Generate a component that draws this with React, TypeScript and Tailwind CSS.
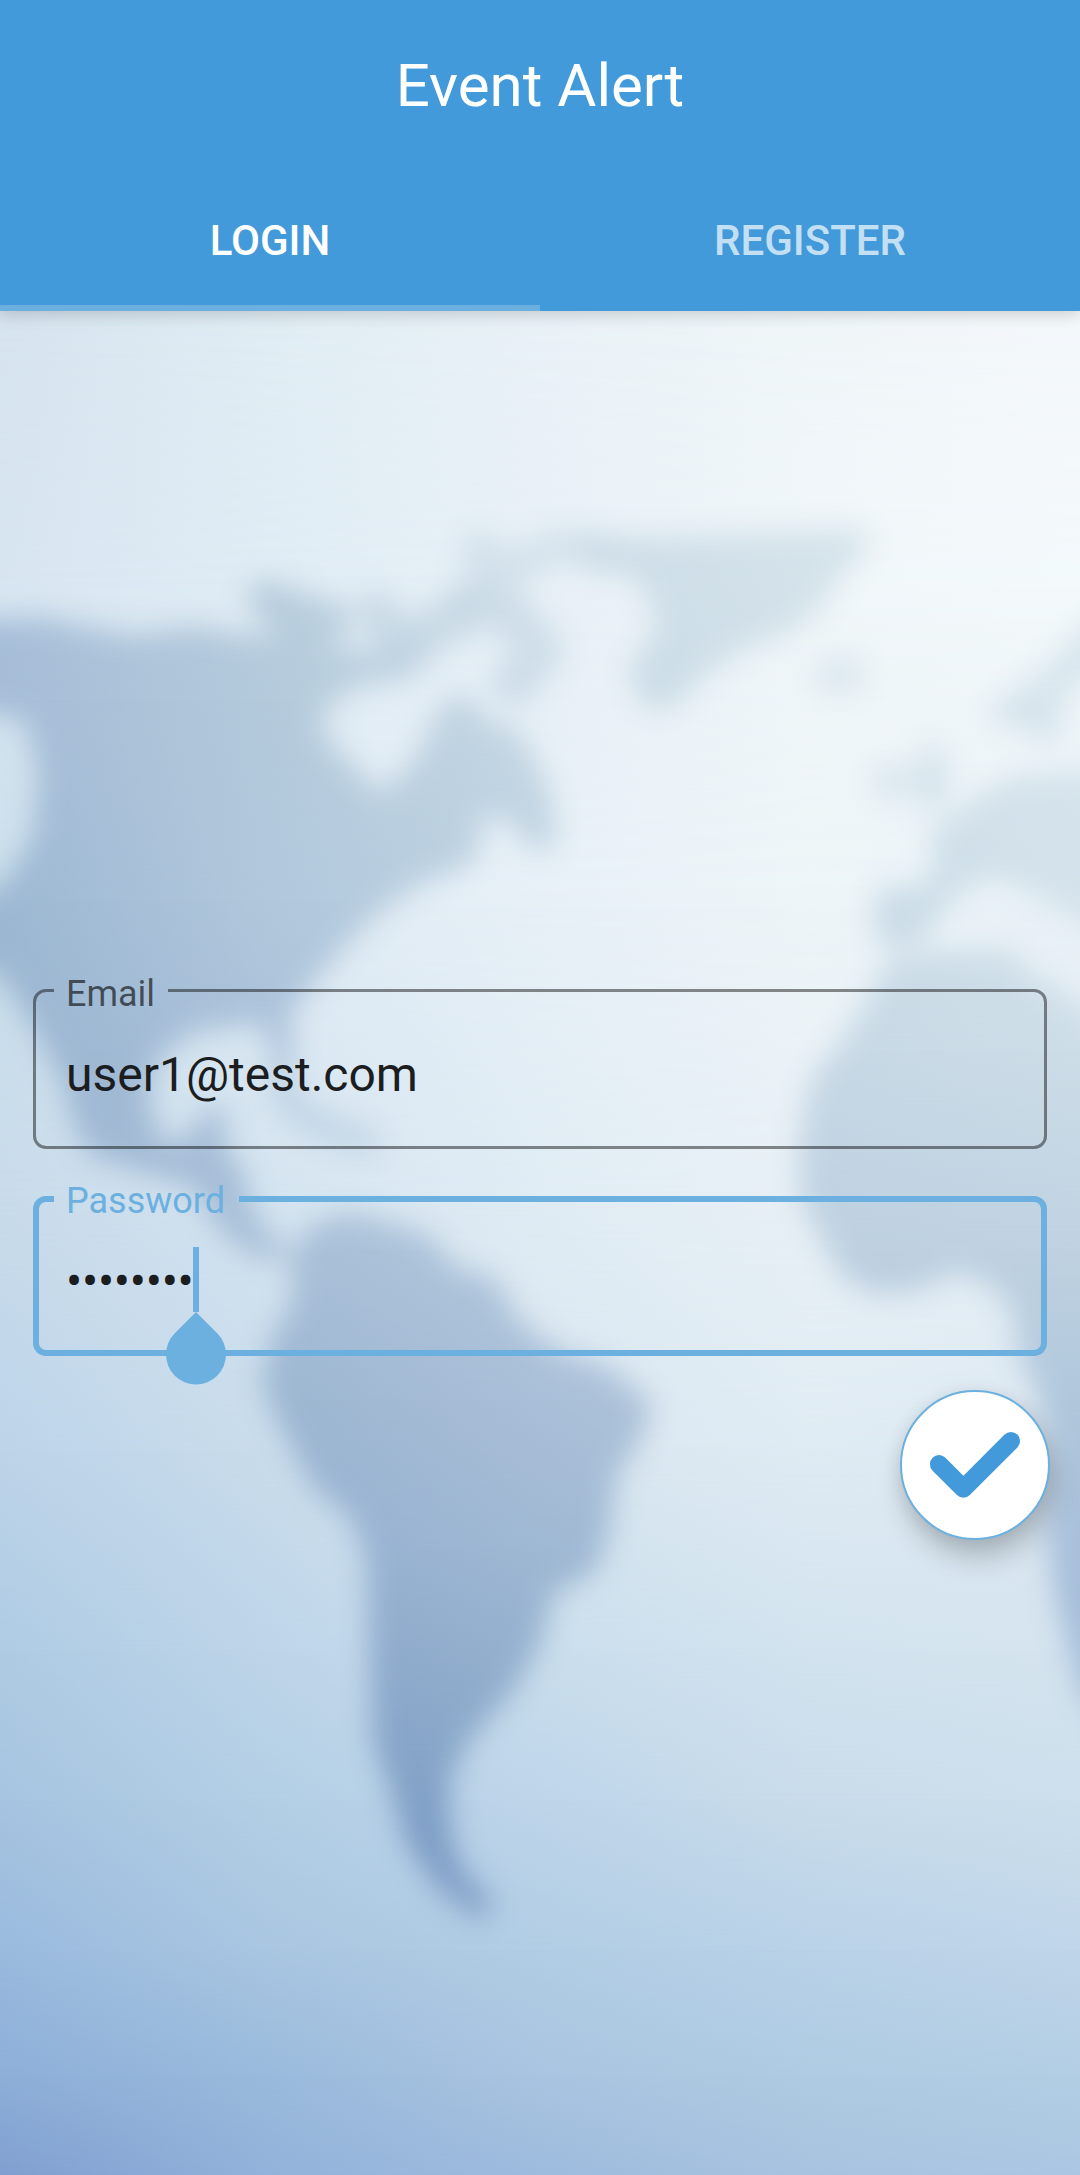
type Mesh = { id: string; xs: number[]; rows: { y: number; colors: string[] }[] };

const SEA: Mesh = {
  id: 'sea',
  xs: [0, 270, 540, 810, 1080],
  rows: [
    { y: 310, colors: ['#d6e4ef', '#e1edf4', '#e9f2f7', '#f0f6f9', '#f4f8fb'] },
    { y: 600, colors: ['#d7e5f1', '#dfecf4', '#e8f0f7', '#f0f6f9', '#f3f9fb'] },
    { y: 900, colors: ['#cbdfeb', '#dfebf4', '#e7f0f7', '#edf5f8', '#e9f1f7'] },
    { y: 1200, colors: ['#c8dbea', '#d4e4f0', '#e0ecf4', '#e8f0f6', '#e4eef5'] },
    { y: 1450, colors: ['#bdd4e9', '#c9dceb', '#d8e6f0', '#dfebf3', '#dde9f2'] },
    { y: 1650, colors: ['#aecbe3', '#bed5e9', '#cadeec', '#d2e3ef', '#d5e4ef'] },
    { y: 1800, colors: ['#a6c4e0', '#b3cfe5', '#bed5ea', '#c9dcea', '#ccdfec'] },
    { y: 1950, colors: ['#9abade', '#a9c6e1', '#b1cde4', '#b9d2e8', '#c0d5e9'] },
    { y: 2075, colors: ['#8dafd8', '#9abadc', '#a9c4e0', '#aecbe2', '#b2cee4'] },
    { y: 2175, colors: ['#809fd0', '#93b2da', '#9dbbdd', '#a7c3df', '#abc6e2'] },
  ],
};

const LAND: Mesh = {
  id: 'land',
  xs: [0, 270, 540, 810, 1080],
  rows: [
    { y: 500, colors: ['#a8bfd9', '#b8cddd', '#cddde7', '#d5e4eb', '#d9e7ef'] },
    { y: 700, colors: ['#a5bcd7', '#b4cadb', '#c6d8e4', '#d2e1e9', '#d7e5ed'] },
    { y: 900, colors: ['#9db8d3', '#b1c8dc', '#bed2e1', '#c8dae6', '#d3e2ea'] },
    { y: 1050, colors: ['#99b4d0', '#abc1da', '#bccfdf', '#c7d8e5', '#cddde8'] },
    { y: 1250, colors: ['#9db6d3', '#a7bed7', '#b2c7dc', '#bdd0e0', '#bfd2e1'] },
    { y: 1400, colors: ['#94afd0', '#9cb6d1', '#aabfd8', '#b4c8dc', '#b0c7db'] },
    { y: 1550, colors: ['#88a6ca', '#94afcf', '#9fb8d3', '#a5bdd7', '#a8bfdb'] },
    { y: 1750, colors: ['#7899c2', '#819fc6', '#8caaca', '#97b2cf', '#a0bad6'] },
    { y: 1850, colors: ['#7495bf', '#7898c2', '#819fc7', '#8eabce', '#9cb6d4'] },
  ],
};

const COASTS = [
  // North and Central America
  '-50,620 0,620 43,618 90,628 138,636 190,627 245,634 285,640 356,650 425,652 415,676 356,686 322,712 328,740 355,768 380,792 405,772 424,745 438,710 463,692 490,722 518,729 535,760 550,790 556,840 545,852 528,845 510,820 478,818 482,850 455,872 427,880 380,911 340,951 308,990 290,1014 294,1060 280,1062 261,1024 198,1030 165,1052 150,1075 151,1110 162,1142 190,1138 203,1112 226,1110 224,1147 243,1170 253,1213 272,1238 290,1248 280,1258 258,1258 224,1234 193,1187 138,1170 90,1155 72,1120 65,1087 34,1027 0,975 -50,960 -50,910 0,887 22,856 34,828 38,770 26,722 0,713 -50,710',
  // Arctic islands
  '243,590 270,580 300,592 345,605 352,625 330,650 280,648 262,620',
  // Greenland
  '575,530 637,537 747,533 858,528 872,542 842,576 813,616 780,637 747,648 707,673 682,700 657,712 635,696 630,665 653,634 653,605 630,576 580,570',
  // Scandinavia
  '1120,600 1080,630 1047,666 1013,691 988,709 1000,726 1030,730 1047,750 1062,728 1063,698 1080,684 1120,660',
  // Europe
  '1130,765 1080,770 1013,776 980,794 947,819 930,832 933,866 920,887 880,885 872,930 890,950 923,943 943,909 973,884 1000,878 1040,896 1080,918 1130,935',
  // Africa
  '1017,951 947,950 890,958 868,998 845,1035 810,1080 799,1141 800,1198 823,1242 843,1276 873,1293 917,1290 957,1271 990,1285 1013,1308 1017,1350 1033,1382 1046,1434 1047,1531 1055,1595 1067,1640 1082,1692 1130,1760 1130,1040 1080,1005 1047,980 1023,969',
  // South America
  '291,1251 315,1224 350,1213 387,1222 427,1234 455,1266 497,1280 518,1320 560,1351 607,1366 652,1402 642,1437 617,1474 608,1537 594,1572 553,1593 540,1644 513,1690 467,1742 449,1782 452,1843 467,1877 494,1902 480,1920 437,1888 405,1840 388,1782 373,1741 370,1665 366,1558 350,1517 313,1486 280,1425 262,1384 272,1338 293,1302',
];

function MeshFill({ mesh }: { mesh: Mesh }) {
  const bottom = 2175;
  return (
    <>
      {mesh.rows.map((row, i) => {
        const top = i === 0 ? 0 : mesh.rows[i - 1].y;
        const key = `${mesh.id}-${i}`;
        return (
          <g key={key}>
            <linearGradient id={`${key}-h`} gradientUnits="userSpaceOnUse" x1="0" y1="0" x2="1080" y2="0">
              {row.colors.map((c, j) => (
                <stop key={j} offset={mesh.xs[j] / 1080} stopColor={c} />
              ))}
            </linearGradient>
            <linearGradient id={`${key}-v`} gradientUnits="userSpaceOnUse" x1="0" y1={top} x2="0" y2={row.y}>
              <stop offset="0" stopColor="#fff" stopOpacity={i === 0 ? 1 : 0} />
              <stop offset="1" stopColor="#fff" />
            </linearGradient>
            <mask id={`${key}-m`} maskUnits="userSpaceOnUse" x="0" y={top} width="1080" height={bottom - top}>
              <rect x="0" y={top} width="1080" height={bottom - top} fill={`url(#${key}-v)`} />
            </mask>
            <rect x="0" y={top} width="1080" height={bottom - top} fill={`url(#${key}-h)`} mask={`url(#${key}-m)`} />
          </g>
        );
      })}
    </>
  );
}

function WorldBackdrop() {
  return (
    <svg className="absolute inset-0 h-full w-full" viewBox="0 0 1080 2175" aria-hidden="true">
      <defs>
        <filter id="soft" filterUnits="userSpaceOnUse" x="-60" y="400" width="1200" height="1700">
          <feGaussianBlur stdDeviation="14" />
        </filter>
        <mask id="continents" maskUnits="userSpaceOnUse" x="0" y="400" width="1080" height="1700">
          <g filter="url(#soft)" fill="#fff" stroke="none">
            {COASTS.map((points) => (
              <polygon key={points} points={points} />
            ))}
            <g fill="none" stroke="#fff" strokeLinecap="round" strokeLinejoin="round">
              <path d="M376 612 L400 640" strokeWidth="40" opacity=".7" />
              <path d="M400 655 L440 625 L480 606 L510 612 L542 650 L514 684" strokeWidth="42" opacity=".8" />
              <path d="M480 550 L500 565 M462 600 L505 575 L550 548 L585 547" strokeWidth="36" opacity=".65" />
              <path d="M278 1060 L290 1105 L325 1128 L368 1142" strokeWidth="24" opacity=".55" />
            </g>
            <ellipse cx="840" cy="675" rx="26" ry="18" opacity=".75" />
            <ellipse cx="893" cy="782" rx="19" ry="17" opacity=".8" />
            <ellipse cx="932" cy="778" rx="17" ry="35" opacity=".85" />
          </g>
        </mask>
      </defs>
      <MeshFill mesh={SEA} />
      <g mask="url(#continents)">
        <MeshFill mesh={LAND} />
      </g>
    </svg>
  );
}

function Header() {
  return (
    <header className="relative flex h-[311px] flex-col bg-[#429ada] text-white shadow-[0_4px_14px_rgba(0,0,0,0.16)]">
      <h1 className="flex h-[168px] items-center justify-center pt-[3px] text-[60px] leading-[70px]">Event Alert</h1>
      <nav className="grid flex-1 grid-cols-2 text-[42px] leading-[50px] font-medium">
        <button className="flex items-center justify-center border-b-[6px] border-[#6bb0df] pt-[9px]">LOGIN</button>
        <button className="flex items-center justify-center border-b-[6px] border-transparent pt-[9px] text-white/70">REGISTER</button>
      </nav>
    </header>
  );
}

function CursorHandle() {
  return (
    <span className="absolute top-0 left-full block h-[65px] w-1.5 bg-[#6bb0df]">
      <svg className="absolute top-[65px] left-[-27px] h-[73px] w-[60px]" viewBox="0 0 60 73" fill="#6bb0df">
        <path d="M30 0 L51.2 21.2 A30 30 0 1 1 8.8 21.2 Z" />
      </svg>
    </span>
  );
}

export default function App() {
  return (
    <div className="relative flex h-[2175px] w-[1080px] flex-col overflow-hidden font-['Roboto',sans-serif]">
      <WorldBackdrop />
      <Header />
      <main className="relative flex flex-col px-[33px] pt-[661px]">
        <fieldset className="h-[177px] rounded-[13px] border-[3px] border-black/45 pl-[18px]">
          <legend className="h-[37px] pr-[13px] pl-3 text-[36px] leading-[44px] text-black/60">Email</legend>
          <div className="pt-[38px] pl-3 text-[48px] leading-[56px] text-[#1b1d1f]">user1@test.com</div>
        </fieldset>
        <fieldset className="mt-[31px] h-[176px] rounded-[13px] border-[6px] border-[#6bb0df] pl-[15px]">
          <legend className="h-[38px] pr-3.5 pl-3 text-[36px] leading-[42px] text-[#6bb0df]">Password</legend>
          <div className="flex pt-[29px] pl-3 text-[48px] text-[#1b1d1f]">
            <span className="relative h-[65px] w-[127px] leading-[69px] tracking-[-0.25px] whitespace-nowrap">
              ••••••••
              <CursorHandle />
            </span>
          </div>
        </fieldset>
        <button
          aria-label="Sign in"
          className="mt-[34px] -mr-[3px] size-[150px] self-end rounded-full border-2 border-[#6bb0df] bg-white shadow-[4px_18px_28px_rgba(0,0,0,0.2),0_2px_18px_rgba(0,0,0,0.08)]"
        >
          <svg className="-m-0.5 size-[150px]" viewBox="0 0 150 150" fill="none">
            <path d="M39 74.2 L63.4 98.6 L111 51" stroke="#429ada" strokeWidth="18.2" strokeLinecap="round" strokeLinejoin="round" />
          </svg>
        </button>
      </main>
    </div>
  );
}
